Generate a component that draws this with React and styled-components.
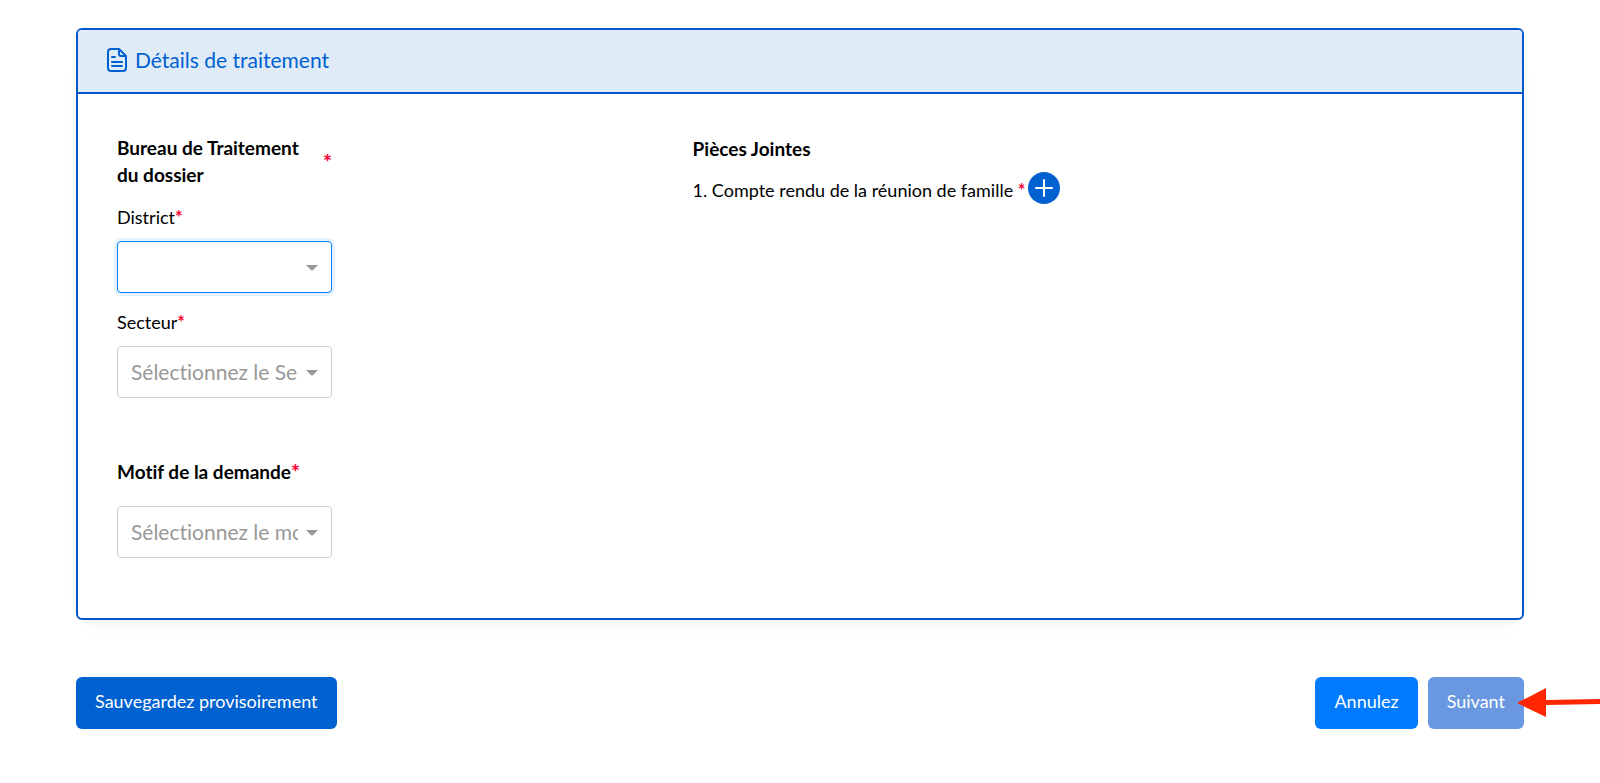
import styled, { createGlobalStyle } from 'styled-components';

const GlobalStyle = createGlobalStyle`
  * { box-sizing: border-box; }
  body {
    margin: 0;
    background: #fff;
    color: #000;
    font-family: Lato, 'Open Sans', sans-serif;
    font-variant-ligatures: none;
    overflow-x: hidden;
  }
`;

const Page = styled.main`
  padding: 0 76px 54px;
`;

const PreviousCard = styled.div`
  height: 0;
  margin: 0 40px 28px;
  box-shadow: 0 0 4px rgba(0, 0, 0, 0.06);
`;

const Card = styled.section`
  border: 2px solid #0457c8;
  border-radius: 6px;
  background: #fff;
  box-shadow: 0 12px 20px -12px rgba(0, 0, 0, 0.07), 0 0 16px -4px rgba(0, 0, 0, 0.03);
  overflow: hidden;
`;

const CardHeader = styled.header`
  display: flex;
  align-items: center;
  gap: 6px;
  height: 64px;
  padding: 0 29px 2px;
  border-bottom: 2px solid #0457c8;
  background: #dfecf7;
  color: #0061d1;
`;

const CardTitle = styled.h2`
  margin: 0;
  font-size: 21px;
  font-weight: 400;
  line-height: 26px;
`;

const CardBody = styled.div`
  display: grid;
  grid-template-columns: 8fr 11fr;
  padding: 40px 38px 60px 39px;
`;

const Fields = styled.div`
  display: flex;
  flex-direction: column;
  width: 215px;
`;

const GroupTitle = styled.h3`
  display: flex;
  align-items: center;
  justify-content: ${(p) => (p.$spread ? 'space-between' : 'flex-start')};
  margin: ${(p) => p.$top || 0}px 0 0;
  font-size: 19px;
  font-weight: 700;
  line-height: 27px;
`;

const Required = styled.span`
  color: #ff0033;
  font-weight: 700;

  ${GroupTitle} & {
    font-size: 21px;
    font-weight: 900;
  }
`;

const Field = styled.div`
  display: flex;
  flex-direction: column;
  gap: 11px;
  margin-top: ${(p) => p.$top}px;
`;

const Label = styled.label`
  font-size: 18px;
  line-height: 26px;
`;

const SelectBox = styled.div`
  position: relative;
  height: 52px;

  &::after {
    content: '';
    position: absolute;
    top: 24px;
    right: 14px;
    border: 6px solid transparent;
    border-top-color: #999;
    border-bottom: 0;
    pointer-events: none;
  }
`;

const Select = styled.select`
  appearance: none;
  width: 100%;
  height: 100%;
  padding: 0 33px 2px 13px;
  border: 1px solid ${(p) => (p.$active ? '#007eff' : '#ccc')};
  border-radius: 4px;
  outline: none;
  background: #fff;
  color: #999;
  font-family: inherit;
  font-size: 21px;
  font-variant-ligatures: none;
  box-shadow: ${(p) => (p.$active ? '0 0 0 3px rgba(0, 126, 255, 0.1)' : 'none')};
`;

const Attachments = styled.section`
  padding-top: 1px;
`;

const AttachmentList = styled.ol`
  margin: 10px 0 0;
  padding: 0;
  list-style: none;
`;

const Attachment = styled.li`
  display: flex;
  align-items: center;
  gap: 3px;
  font-size: 18px;
  line-height: 32px;
`;

const AttachmentName = styled.span`
  padding-top: 4px;
  line-height: 28px;
`;

const AddButton = styled.button`
  display: flex;
  align-items: center;
  justify-content: center;
  width: 32px;
  height: 32px;
  padding: 0;
  border: 0;
  border-radius: 50%;
  background: #0061d1;
  cursor: pointer;
`;

const Actions = styled.footer`
  position: relative;
  display: flex;
  gap: 10px;
  margin-top: 57px;
`;

const Button = styled.button`
  height: 52px;
  padding: 0 19px 4px;
  border: 0;
  border-radius: 6px;
  margin-right: ${(p) => (p.$first ? 'auto' : '0')};
  background: ${(p) => p.$color};
  color: #fff;
  font-family: inherit;
  font-size: 18px;
  cursor: pointer;

  &:disabled { cursor: default; }
`;

const Pointer = styled.svg`
  position: absolute;
  top: 10px;
  right: -76px;
`;

function FileIcon() {
  return (
    <svg width="22" height="26" viewBox="0 0 22 26" fill="none" stroke="currentColor" strokeWidth="2" strokeLinejoin="round" aria-hidden="true">
      <path d="M12 2H4a3 3 0 0 0-3 3v16a3 3 0 0 0 3 3h12a3 3 0 0 0 3-3V9z" />
      <path d="M12 2v5a2 2 0 0 0 2 2h5" />
      <path d="M5 10h3M5 15h10M5 19h10" strokeLinecap="round" />
    </svg>
  );
}

function SelectField({ id, label, labelledBy, placeholder, active, top }) {
  return (
    <Field $top={top}>
      {label && (
        <Label htmlFor={id}>
          {label}
          <Required>*</Required>
        </Label>
      )}
      <SelectBox>
        <Select id={id} $active={active} defaultValue="" aria-labelledby={labelledBy}>
          <option value="">{placeholder}</option>
        </Select>
      </SelectBox>
    </Field>
  );
}

export default function App() {
  return (
    <>
      <GlobalStyle />
      <Page>
        <PreviousCard />
        <Card>
          <CardHeader>
            <FileIcon />
            <CardTitle>Détails de traitement</CardTitle>
          </CardHeader>
          <CardBody>
            <Fields>
              <GroupTitle $spread>
                <span>
                  Bureau de Traitement
                  <br />
                  du dossier
                </span>
                <Required>*</Required>
              </GroupTitle>
              <SelectField id="district" label="District" placeholder="" active top={16} />
              <SelectField id="secteur" label="Secteur" placeholder="Sélectionnez le Secteur" top={16} />
              <GroupTitle id="motif-title" $top={60}>
                Motif de la demande<Required>*</Required>
              </GroupTitle>
              <SelectField id="motif" labelledBy="motif-title" placeholder="Sélectionnez le motif" top={21} />
            </Fields>
            <Attachments>
              <GroupTitle>Pièces Jointes</GroupTitle>
              <AttachmentList>
                <Attachment>
                  <AttachmentName>
                    1. Compte rendu de la réunion de famille <Required>*</Required>
                  </AttachmentName>
                  <AddButton type="button" aria-label="Ajouter une pièce jointe">
                    <svg width="18" height="18" viewBox="0 0 18 18" stroke="#fff" strokeWidth="2" strokeLinecap="round">
                      <path d="M9 1v16M1 9h16" />
                    </svg>
                  </AddButton>
                </Attachment>
              </AttachmentList>
            </Attachments>
          </CardBody>
        </Card>
        <Actions>
          <Button type="button" $color="#0061d1" $first>Sauvegardez provisoirement</Button>
          <Button type="button" $color="#007bff">Annulez</Button>
          <Button type="button" $color="#6a98e0" disabled>Suivant</Button>
          <Pointer width="83" height="32" viewBox="0 0 83 32" fill="#ff2600" aria-hidden="true">
            <path d="M0 16L29 1v12l54-1v5l-54 1v12z" />
          </Pointer>
        </Actions>
      </Page>
    </>
  );
}
